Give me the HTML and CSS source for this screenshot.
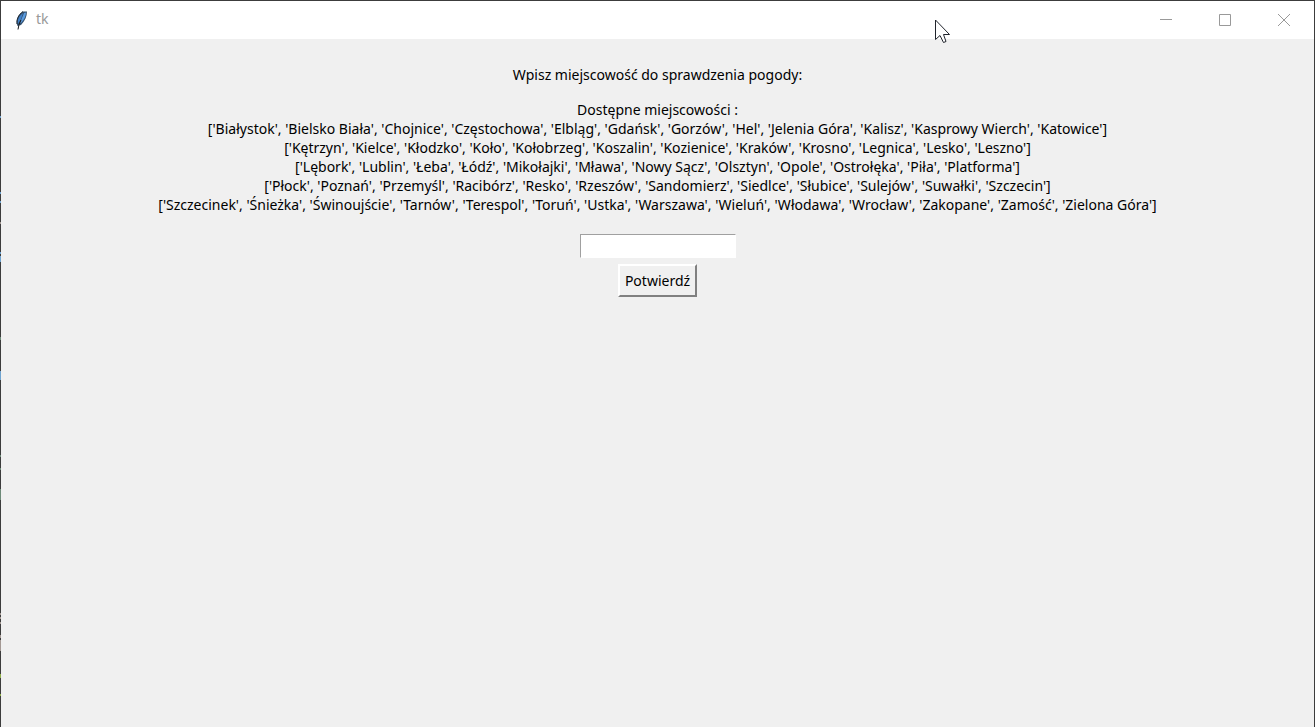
FILE: index.html
```html
<!DOCTYPE html>
<html lang="pl">
<head>
<meta charset="utf-8">
<title>tk</title>
<link rel="stylesheet" href="styles.css">
</head>
<body>
<div class="window">
  <header class="titlebar">
    <svg class="feather" viewBox="0 0 16 20" aria-hidden="true">
      <path d="M4.500 16C2.500 12 4 5 10 1.500L14 1.500C14 6 12 11 8 15Z" fill="#33506e"/>
      <path d="M5 14C4 10 6 6 10 3L8 9Z" fill="#3f7fc8"/>
      <path d="M7 13L11 3L13 2.500C13 6 11 10 8 13Z" fill="#5a9be0"/>
      <path d="M5 19.500L6 14.500L8 10" stroke="#18191c" fill="none"/>
      <path d="M4 14C3.500 10 5 5 10 1.500" stroke="#222a33" fill="none"/>
    </svg>
    <span class="title">tk</span>
    <div class="controls">
      <button class="control" type="button" aria-label="Minimalizuj"><svg viewBox="0 0 12 12"><path d="M0 5.500H12"/></svg></button>
      <button class="control" type="button" aria-label="Maksymalizuj"><svg viewBox="0 0 12 12"><path d="M.5 .5H11.500V11.500H.5Z"/></svg></button>
      <button class="control" type="button" aria-label="Zamknij"><svg viewBox="0 0 12 12"><path d="M0 0L12 12M12 0L0 12"/></svg></button>
    </div>
  </header>
  <main class="content">
    <label class="prompt" for="city">Wpisz miejscowość do sprawdzenia pogody:</label>
    <p class="cities">Dostępne miejscowości :<br>
['Białystok', 'Bielsko Biała', 'Chojnice', 'Częstochowa', 'Elbląg', 'Gdańsk', 'Gorzów', 'Hel', 'Jelenia Góra', 'Kalisz', 'Kasprowy Wierch', 'Katowice']<br>
['Kętrzyn', 'Kielce', 'Kłodzko', 'Koło', 'Kołobrzeg', 'Koszalin', 'Kozienice', 'Kraków', 'Krosno', 'Legnica', 'Lesko', 'Leszno']<br>
['Lębork', 'Lublin', 'Łeba', 'Łódź', 'Mikołajki', 'Mława', 'Nowy Sącz', 'Olsztyn', 'Opole', 'Ostrołęka', 'Piła', 'Platforma']<br>
['Płock', 'Poznań', 'Przemyśl', 'Racibórz', 'Resko', 'Rzeszów', 'Sandomierz', 'Siedlce', 'Słubice', 'Sulejów', 'Suwałki', 'Szczecin']<br>
['Szczecinek', 'Śnieżka', 'Świnoujście', 'Tarnów', 'Terespol', 'Toruń', 'Ustka', 'Warszawa', 'Wieluń', 'Włodawa', 'Wrocław', 'Zakopane', 'Zamość', 'Zielona Góra']</p>
    <input class="entry" id="city" type="text">
    <button class="confirm" type="button">Potwierdź</button>
  </main>
  <svg class="edge" aria-hidden="true">
    <path d="M.5 116v2M.5 192v2M.5 201v2M.5 252v2M.5 256v6M.5 371v9" stroke="#6fa3cf"/>
    <path d="M.5 222v2M.5 613v2M.5 617v2M.5 622v2M.5 635v3M.5 640v11" stroke="#a39893"/>
    <path d="M.5 337v3M.5 455v2M.5 468v2M.5 489v11" stroke="#6d8a78"/>
    <path d="M.5 674v4M.5 694v2" stroke="#8fae48"/>
  </svg>
  <svg class="pointer" viewBox="0 0 16 25" aria-hidden="true"><path d="M.5 1V20.500L5 16.500L8.500 23.500L11 22.500L8.500 15.500H14.500Z"/></svg>
</div>
</body>
</html>
```

FILE: styles.css
```css
* { box-sizing: border-box; }
body { margin: 0; font-family: "Noto Sans", "Open Sans", sans-serif; font-size: 14px; color: #000; }
.window { position: relative; display: flex; flex-direction: column; min-height: 100vh; background: #f0f0f0; border: 1px solid #3c3c3c; border-bottom: 0; }
.titlebar { display: flex; align-items: center; height: 38px; padding-left: 12px; background: #fff; color: #999; }
.feather { width: 16px; height: 20px; margin-right: 7px; }
.title { line-height: 18px; padding-bottom: 2px; }
.controls { display: flex; align-self: stretch; margin-left: auto; padding-right: 1px; }
.control { display: flex; align-items: center; justify-content: center; width: 59px; padding: 0; border: 0; background: none; }
.control svg { width: 12px; height: 12px; fill: none; stroke: #999; }
.content { display: flex; flex-direction: column; align-items: center; padding: 26px 8px; line-height: 19px; text-align: center; }
.cities { margin: 16px 0 20px; }
.entry { width: 156px; height: 24px; margin-bottom: 6px; border: 1px solid #fff; border-top-color: #a0a0a0; border-left-color: #a0a0a0; background: #fff; font: inherit; }
.confirm { height: 33px; padding: 0 5px; border: 2px solid; border-color: #fff #808080 #808080 #fff; background: #f0f0f0; font: inherit; color: #000; }
.edge { position: absolute; left: -1px; top: -1px; width: 1px; height: 100%; }
.pointer { position: absolute; left: 934px; top: 18px; width: 16px; height: 25px; fill: #fff; stroke: #20242c; }
```
